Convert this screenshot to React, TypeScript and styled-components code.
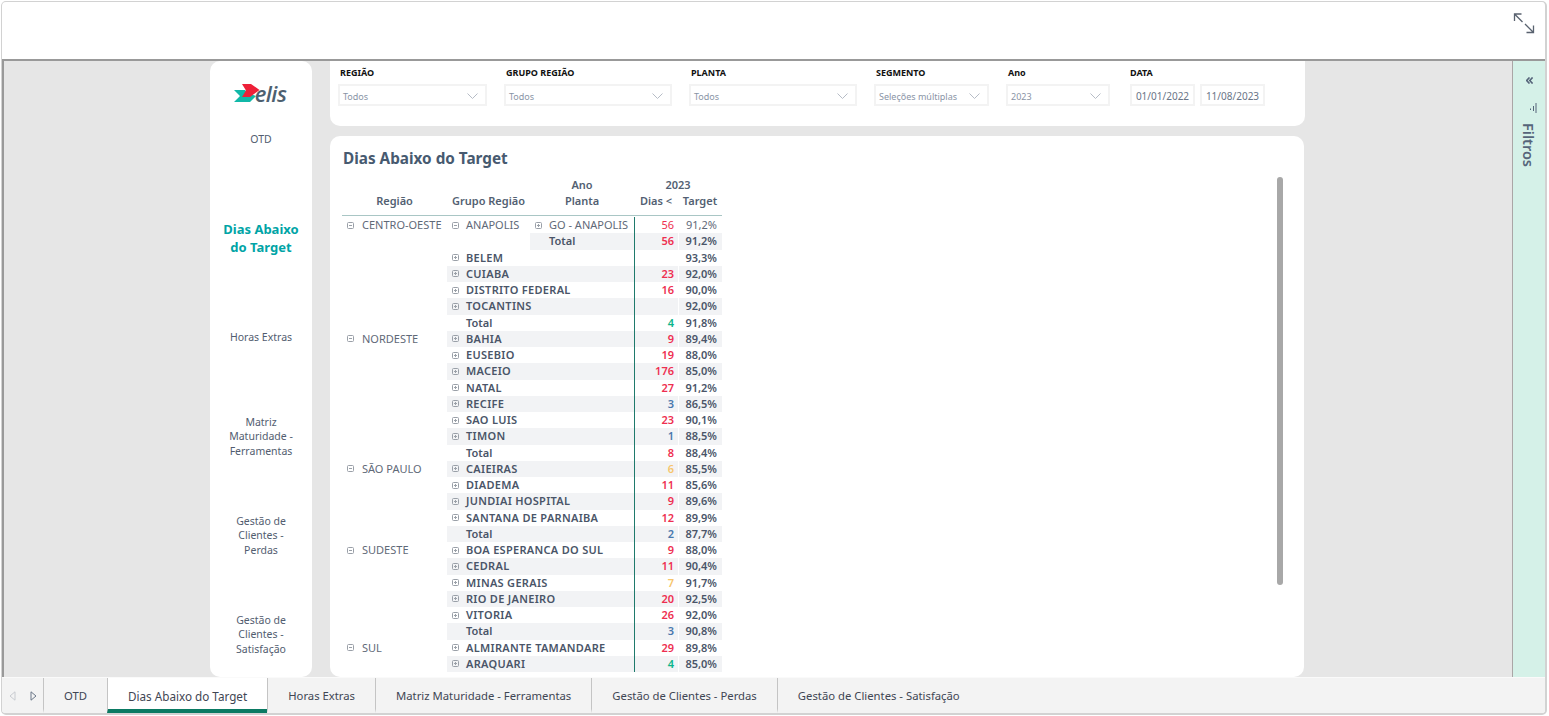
import { createGlobalStyle } from 'styled-components';
import styled from 'styled-components';

// ====

const FONT = '"Noto Sans", "Open Sans", sans-serif';
const INK = '#4a5568';
const TONES = {
  red: '#ee2f50',
  green: '#0bb58a',
  yellow: '#f7c56b',
  blue: '#4a78ad',
};

type Tone = keyof typeof TONES;

interface IRow {
  region?: string;
  group?: string;
  plant?: string;
  total?: 'group' | 'plant';
  days?: string;
  tone?: Tone;
  target: string;
}

const ROWS: IRow[] = [
  { region: 'CENTRO-OESTE', group: 'ANAPOLIS', plant: 'GO - ANAPOLIS', days: '56', tone: 'red', target: '91,2%' },
  { total: 'plant', days: '56', tone: 'red', target: '91,2%' },
  { group: 'BELEM', target: '93,3%' },
  { group: 'CUIABA', days: '23', tone: 'red', target: '92,0%' },
  { group: 'DISTRITO FEDERAL', days: '16', tone: 'red', target: '90,0%' },
  { group: 'TOCANTINS', target: '92,0%' },
  { total: 'group', days: '4', tone: 'green', target: '91,8%' },
  { region: 'NORDESTE', group: 'BAHIA', days: '9', tone: 'red', target: '89,4%' },
  { group: 'EUSEBIO', days: '19', tone: 'red', target: '88,0%' },
  { group: 'MACEIO', days: '176', tone: 'red', target: '85,0%' },
  { group: 'NATAL', days: '27', tone: 'red', target: '91,2%' },
  { group: 'RECIFE', days: '3', tone: 'blue', target: '86,5%' },
  { group: 'SAO LUIS', days: '23', tone: 'red', target: '90,1%' },
  { group: 'TIMON', days: '1', tone: 'blue', target: '88,5%' },
  { total: 'group', days: '8', tone: 'red', target: '88,4%' },
  { region: 'SÃO PAULO', group: 'CAIEIRAS', days: '6', tone: 'yellow', target: '85,5%' },
  { group: 'DIADEMA', days: '11', tone: 'red', target: '85,6%' },
  { group: 'JUNDIAI HOSPITAL', days: '9', tone: 'red', target: '89,6%' },
  { group: 'SANTANA DE PARNAIBA', days: '12', tone: 'red', target: '89,9%' },
  { total: 'group', days: '2', tone: 'blue', target: '87,7%' },
  { region: 'SUDESTE', group: 'BOA ESPERANCA DO SUL', days: '9', tone: 'red', target: '88,0%' },
  { group: 'CEDRAL', days: '11', tone: 'red', target: '90,4%' },
  { group: 'MINAS GERAIS', days: '7', tone: 'yellow', target: '91,7%' },
  { group: 'RIO DE JANEIRO', days: '20', tone: 'red', target: '92,5%' },
  { group: 'VITORIA', days: '26', tone: 'red', target: '92,0%' },
  { total: 'group', days: '3', tone: 'blue', target: '90,8%' },
  { region: 'SUL', group: 'ALMIRANTE TAMANDARE', days: '29', tone: 'red', target: '89,8%' },
  { group: 'ARAQUARI', days: '4', tone: 'green', target: '85,0%' },
];

const NAV_ITEMS = [
  'OTD',
  'Dias Abaixo do Target',
  'Horas Extras',
  'Matriz Maturidade - Ferramentas',
  'Gestão de Clientes - Perdas',
  'Gestão de Clientes - Satisfação',
];

const TABS = NAV_ITEMS;
const ACTIVE = 'Dias Abaixo do Target';

const SLICERS = [
  { label: 'REGIÃO', value: 'Todos', width: 149 },
  { label: 'GRUPO REGIÃO', value: 'Todos', width: 168 },
  { label: 'PLANTA', value: 'Todos', width: 168 },
  { label: 'SEGMENTO', value: 'Seleções múltiplas', width: 115 },
  { label: 'Ano', value: '2023', width: 104 },
];

const GlobalStyle = createGlobalStyle`
  html, body {
    margin: 0;
    height: 716px;
    overflow: hidden;
    background: #fff;
    font-family: ${FONT};
  }
`;

const Frame = styled.div`
  box-sizing: border-box;
  width: 1546px;
  height: 714px;
  margin: 1px 0 0 1px;
  display: flex;
  flex-direction: column;
  border: solid #d2d2d2;
  border-width: 1px 2px 2px 1px;
  border-radius: 5px;
  overflow: hidden;
`;

const Header = styled.header`
  height: 57px;
  flex: none;
  display: flex;
  justify-content: flex-end;
  padding: 11px 10px 0 0;
  box-sizing: border-box;
`;

const Report = styled.div`
  flex: 1;
  min-height: 0;
  display: flex;
  border-top: 2px solid #999;
`;

const Canvas = styled.main`
  flex: 1;
  display: flex;
  gap: 18px;
  padding-left: 206px;
  background: #e6e6e6;
  border-left: 2px solid #999;
`;

const Sidebar = styled.nav`
  width: 102px;
  flex: none;
  display: flex;
  flex-direction: column;
  gap: 39px;
  background: #fff;
  border-radius: 10px;
`;

const LogoWrap = styled.div`
  height: 48px;
  margin-bottom: -39px;
  padding: 23px 2px 0 0;
  box-sizing: border-box;
  display: flex;
  justify-content: center;
  align-items: flex-start;
`;

const LogoText = styled.span`
  margin-left: -5px;
  font-family: "Open Sans", sans-serif;
  font-style: italic;
  font-weight: 600;
  font-size: 22px;
  line-height: 19px;
  letter-spacing: -0.5px;
  color: #4d6070;
`;

const NavItem = styled.div<{ $active?: boolean }>`
  height: 60px;
  box-sizing: border-box;
  display: flex;
  align-items: center;
  justify-content: center;
  text-align: center;
  padding: ${({ $active }) => $active ? '0 12px' : '1px 12px 0'};
  font-size: ${({ $active }) => $active ? '13px' : '10.5px'};
  font-weight: ${({ $active }) => $active ? 700 : 400};
  line-height: ${({ $active }) => $active ? '18px' : '14.5px'};
  color: ${({ $active }) => $active ? '#00a4a6' : '#525d70'};
`;

const Main = styled.div`
  width: 975px;
  flex: none;
  display: flex;
  flex-direction: column;
  gap: 10px;
`;

const SlicerCard = styled.section`
  height: 65px;
  flex: none;
  box-sizing: border-box;
  padding: 5px 0 0 8px;
  display: flex;
  gap: 17px;
  background: #fff;
  border-radius: 0 0 10px 10px;
`;

const Slicer = styled.div<{ $width: number }>`
  width: ${({ $width }) => $width}px;
`;

const DateSlicer = styled.div`
  margin-left: 3px;
`;

const SlicerLabel = styled.div<{ $flush?: boolean }>`
  height: 18px;
  margin-left: ${({ $flush }) => $flush ? 0 : 2}px;
  font-size: 9px;
  font-weight: 700;
  line-height: 14px;
  color: #111;
`;

const SlicerBox = styled.div`
  height: 22px;
  box-sizing: border-box;
  padding: 2px 7px 0 3px;
  display: flex;
  align-items: center;
  justify-content: space-between;
  border: 2px solid #f3f3f3;
  font-size: 9px;
  color: #8a94a6;
`;

const DateRow = styled.div`
  display: flex;
  gap: 5px;
`;

const DateBox = styled(SlicerBox)`
  width: 65px;
  padding: 1px 0 0;
  justify-content: center;
  font-size: 10px;
  color: #6a7587;
`;

const TableCard = styled.section`
  position: relative;
  flex: 1;
  min-height: 0;
  width: 974px;
  box-sizing: border-box;
  padding: 12px 0 0 12px;
  background: #fff;
  border-radius: 10px;
  overflow: hidden;
`;

const Title = styled.h1`
  margin: 0 0 9px 1px;
  font-size: 15.3px;
  font-weight: 700;
  line-height: 20px;
  color: #475a70;
`;

const Scrollbar = styled.div`
  position: absolute;
  top: 41px;
  left: 947px;
  width: 6px;
  height: 408px;
  border-radius: 3px;
  background: #a8a8a8;
`;

const Matrix = styled.div`
  width: 380px;
  font-size: 11px;
  color: ${INK};
`;

const HeadGrid = styled.div`
  display: grid;
  grid-template-columns: 105px 83px 104px 44px 44px;
  grid-auto-rows: 16px;
  height: 38px;
  margin-bottom: 1px;
  border-bottom: 1px solid #a9c6c5;
  font-weight: 600;
  line-height: 16px;
  text-align: center;
  color: #535f72;
`;

const HeadYear = styled.div`
  grid-column: 4 / span 2;
`;

const HeadCell = styled.div<{ $column: number }>`
  grid-column: ${({ $column }) => $column};
`;

const HeadCellFirst = styled(HeadCell)`
  grid-row: 1;
`;

const HeadCellSecond = styled(HeadCell)`
  grid-row: 2;
  white-space: nowrap;
`;

const BodyRow = styled.div`
  display: grid;
  grid-template-columns: 105px 83px 104px 44px 44px;
  height: 16.26px;
  line-height: 16px;
  white-space: nowrap;
`;

const RegionCell = styled.div`
  display: flex;
  align-items: center;
  gap: 8px;
  padding-left: 5px;
  color: #5f6978;
`;

const Cell = styled.div<{ $striped?: boolean; $bold?: boolean; $span?: number }>`
  grid-column: span ${({ $span }) => $span || 1};
  display: flex;
  align-items: center;
  gap: 7px;
  min-width: 0;
  padding-left: 5px;
  background: ${({ $striped }) => $striped ? '#f2f3f5' : 'transparent'};
  font-weight: ${({ $bold }) => $bold ? 600 : 400};
  color: ${({ $bold }) => $bold ? INK : '#5f6978'};
`;

const GroupName = styled.span`
  letter-spacing: 0.3px;
`;

const TotalLabel = styled.span`
  padding-left: 14px;
`;

const DaysCell = styled(Cell)<{ $tone?: Tone }>`
  justify-content: flex-end;
  padding: 0 4px 0 0;
  border-left: 1px solid #1f7a6c;
  color: ${({ $tone }) => $tone ? TONES[$tone] : INK};
`;

const TargetCell = styled(Cell)`
  justify-content: flex-end;
  padding: 0 5px 0 0;
  border-left: 1px solid #fff;
`;

const FilterPane = styled.aside`
  width: 33px;
  flex: none;
  box-sizing: border-box;
  display: flex;
  flex-direction: column;
  align-items: center;
  padding: 16px 0 0 1px;
  background: #d5f1e8;
  border-left: 1px solid #aaa6a6;
  color: #56657a;
`;

const FilterIcon = styled.svg`
  margin: 19px 0 0 6px;
`;

const FilterText = styled.div`
  margin: 10px 2px 0 0;
  writing-mode: vertical-rl;
  font-size: 14.5px;
  font-weight: 600;
  line-height: 18px;
`;

const TabBar = styled.footer`
  height: 36px;
  flex: none;
  display: flex;
  background: #f3f3f3;
  border-top: 1px solid #fafafa;
  box-sizing: border-box;
  color: #3f4653;
`;

const TabNav = styled.div`
  width: 41px;
  flex: none;
  display: flex;
  align-items: center;
  gap: 14px;
  padding-left: 7px;
  box-sizing: border-box;
`;

const Tab = styled.div<{ $active?: boolean }>`
  padding: 4px 20px 0;
  display: flex;
  align-items: center;
  box-sizing: border-box;
  white-space: nowrap;
  font-size: ${({ $active }) => $active ? '11.7px' : '11.3px'};
  border-left: 1px solid #c4c4c4;
  border-bottom: 4px solid ${({ $active }) => $active ? '#0b7a63' : 'transparent'};
  background: ${({ $active }) => $active ? '#fff' : 'transparent'};
`;

const Chevron = () => (
  <svg width="11" height="7" viewBox="0 0 11 7" fill="none" stroke="#b6bcc6" strokeWidth="1">
    <path d="M0.5 0.5 L5.5 5.5 L10.5 0.5" />
  </svg>
);

const Expander = ({ open }: { open?: boolean }) => (
  <svg width="7" height="7" viewBox="0 0 7 7" fill="none" stroke="#9aa0a8" strokeWidth="1" style={{ flex: 'none' }}>
    <rect x="0.5" y="0.5" width="6" height="6" rx="1" />
    <path d="M2 3.5 H5" />
    {!open && <path d="M3.5 2 V5" />}
  </svg>
);

const Logo = () => (
  <svg width="26" height="18" viewBox="0 0 26 18">
    <path d="M0 6 H11 L14 9 L22 12 L16 18 H0 L6 12 Z" fill="#11b8a8" />
    <path d="M8 0 H17 L25.5 6 L16 13 H8 L12 6.5 Z" fill="#ee2038" />
  </svg>
);

const ExpandIcon = () => (
  <svg width="22" height="21" viewBox="0 0 22 21" fill="none" stroke="#59626f" strokeWidth="1.3">
    <path d="M1.5 8 V1 H8.5 M1.5 1 L9.5 9 M20.5 12.5 V19.5 H13.5 M20.5 19.5 L12 11" />
  </svg>
);

const DoubleLeft = () => (
  <svg width="7" height="7" viewBox="0 0 8 8" fill="none" stroke="#56657a" strokeWidth="1.8">
    <path d="M4 0.5 L0.8 4 L4 7.5 M7.5 0.5 L4.3 4 L7.5 7.5" />
  </svg>
);

const TriangleLeft = () => (
  <svg width="7" height="10" viewBox="0 0 7 10" fill="none" stroke="#c8cbd0">
    <path d="M6 0.8 V9.2 L1 5 Z" />
  </svg>
);

const TriangleRight = () => (
  <svg width="7" height="10" viewBox="0 0 7 10" fill="none" stroke="#6a7788">
    <path d="M1 0.8 V9.2 L6 5 Z" />
  </svg>
);

const Row = ({ row, index }: { row: IRow; index: number }) => {
  const striped = index % 2 === 1;
  const isOpenRow = !!row.plant;
  const isFirstTotal = row.total === 'plant';

  return (
    <BodyRow>
      <RegionCell>
        {row.region && <Expander open />}
        {row.region}
      </RegionCell>
      {isOpenRow && (
        <>
          <Cell>
            <Expander open />
            {row.group}
          </Cell>
          <Cell>
            <Expander />
            {row.plant}
          </Cell>
        </>
      )}
      {isFirstTotal && (
        <>
          <Cell />
          <Cell $striped $bold>
            <TotalLabel>Total</TotalLabel>
          </Cell>
        </>
      )}
      {!isOpenRow && !isFirstTotal && (
        <Cell $span={2} $striped={striped} $bold>
          {row.group && <Expander />}
          {row.group ? <GroupName>{row.group}</GroupName> : <TotalLabel>Total</TotalLabel>}
        </Cell>
      )}
      <DaysCell $striped={striped} $bold={!isOpenRow} $tone={row.tone}>{row.days}</DaysCell>
      <TargetCell $striped={striped} $bold={!isOpenRow}>{row.target}</TargetCell>
    </BodyRow>
  );
};

const App = () => (
  <>
    <GlobalStyle />
    <Frame>
      <Header>
        <ExpandIcon />
      </Header>
      <Report>
        <Canvas>
          <Sidebar>
            <LogoWrap>
              <Logo />
              <LogoText>elis</LogoText>
            </LogoWrap>
            {NAV_ITEMS.map((item) => (
              <NavItem key={item} $active={item === ACTIVE}>{item}</NavItem>
            ))}
          </Sidebar>
          <Main>
            <SlicerCard>
              {SLICERS.map((slicer) => (
                <Slicer key={slicer.label} $width={slicer.width}>
                  <SlicerLabel>{slicer.label}</SlicerLabel>
                  <SlicerBox>
                    {slicer.value}
                    <Chevron />
                  </SlicerBox>
                </Slicer>
              ))}
              <DateSlicer>
                <SlicerLabel $flush>DATA</SlicerLabel>
                <DateRow>
                  <DateBox>01/01/2022</DateBox>
                  <DateBox>11/08/2023</DateBox>
                </DateRow>
              </DateSlicer>
            </SlicerCard>
            <TableCard>
              <Title>Dias Abaixo do Target</Title>
              <Matrix>
                <HeadGrid>
                  <HeadCellFirst $column={3}>Ano</HeadCellFirst>
                  <HeadYear>2023</HeadYear>
                  <HeadCellSecond $column={1}>Região</HeadCellSecond>
                  <HeadCellSecond $column={2}>Grupo Região</HeadCellSecond>
                  <HeadCellSecond $column={3}>Planta</HeadCellSecond>
                  <HeadCellSecond $column={4}>Dias &lt;</HeadCellSecond>
                  <HeadCellSecond $column={5}>Target</HeadCellSecond>
                </HeadGrid>
                {ROWS.map((row, index) => (
                  <Row key={index} row={row} index={index} />
                ))}
              </Matrix>
              <Scrollbar />
            </TableCard>
          </Main>
        </Canvas>
        <FilterPane>
          <DoubleLeft />
          <FilterIcon width="8" height="10" viewBox="0 0 8 10" fill="none" stroke="#56657a">
            <path d="M7 0 V10 M4.5 3 V8 M1.5 5.5 V7" />
          </FilterIcon>
          <FilterText>Filtros</FilterText>
        </FilterPane>
      </Report>
      <TabBar>
        <TabNav>
          <TriangleLeft />
          <TriangleRight />
        </TabNav>
        {TABS.map((tab) => (
          <Tab key={tab} $active={tab === ACTIVE}>{tab}</Tab>
        ))}
      </TabBar>
    </Frame>
  </>
);

export default App;
